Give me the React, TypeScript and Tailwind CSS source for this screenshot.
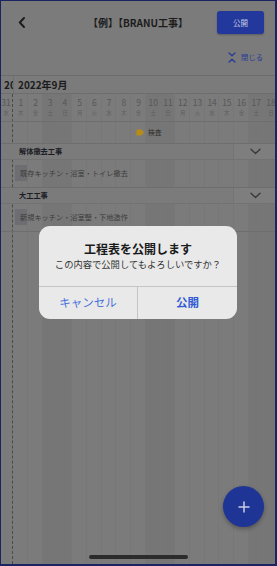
import React from "react";

const days: { d: number; w: string; we: boolean }[] = [
  { d: 31, w: "水", we: false },
  { d: 1, w: "木", we: false },
  { d: 2, w: "金", we: false },
  { d: 3, w: "土", we: true },
  { d: 4, w: "日", we: true },
  { d: 5, w: "月", we: false },
  { d: 6, w: "火", we: false },
  { d: 7, w: "水", we: false },
  { d: 8, w: "木", we: false },
  { d: 9, w: "金", we: false },
  { d: 10, w: "土", we: true },
  { d: 11, w: "日", we: true },
  { d: 12, w: "月", we: false },
  { d: 13, w: "火", we: false },
  { d: 14, w: "水", we: false },
  { d: 15, w: "木", we: false },
  { d: 16, w: "金", we: false },
  { d: 17, w: "土", we: true },
  { d: 18, w: "日", we: true },
];

function Chevron() {
  return (
    <svg width="11" height="7" viewBox="0 0 11 7" fill="none">
      <path d="M1 1.2 L5.5 5.5 L10 1.2" stroke="#3a3a3a" strokeWidth="1.4" strokeLinecap="round" strokeLinejoin="round" />
    </svg>
  );
}

function SectionRow({ title }: { title: string }) {
  return (
    <div className="flex h-[16px] border-b border-[#727272] bg-[#7b7b7b]">
      <div className="flex-1 flex items-center pl-[18px] text-[7.2px] font-bold text-[#1c1c24] leading-none">
        {title}
      </div>
      <div className="w-[42px] border-l border-[#747474] bg-[#7e7e7e] flex items-center justify-center pl-[2px]">
        <Chevron />
      </div>
    </div>
  );
}

function TaskRow({ title }: { title: string }) {
  return (
    <div className="relative h-[28px] border-b border-[#6e6e6e]">
      <div className="absolute left-[14px] top-[5px] w-[12px] h-[16px] bg-[#6d6d72]" />
      <div className="relative h-full flex items-center pl-[19px] text-[7.2px] text-[#3c3c3c] leading-none">
        {title}
      </div>
    </div>
  );
}

export default function App() {
  return (
    <div
      className="relative w-[277px] h-[566px] overflow-hidden bg-[#7b7b7b] border-l border-t border-r-2 border-b-2 border-[#1b2461] flex flex-col"
      style={{ fontFamily: '"Noto Sans CJK JP", "Noto Sans", sans-serif' }}
    >
      {/* Header */}
      <div className="h-[43px] flex items-center shrink-0">
        <div className="w-[60px] pl-[17px] flex items-center">
          <svg width="8" height="11" viewBox="0 0 8 11" fill="none">
            <path d="M6 1 L1.8 5.5 L6 10" stroke="#1c1c1c" strokeWidth="1.9" strokeLinecap="round" strokeLinejoin="round" />
          </svg>
        </div>
        <div className="flex-1 text-center text-[10px] font-bold text-[#1c1c1c] leading-none whitespace-nowrap">
          【例】【BRANU工事】
        </div>
        <div className="w-[60px] flex justify-end pr-[11px]">
          <div className="w-[47px] h-[23px] rounded-[3px] bg-[#23389c] flex items-center justify-center text-[7.5px] text-[#c9cce4] leading-none shadow-[0_1px_2px_rgba(0,0,0,0.25)]">
            公開
          </div>
        </div>
      </div>

      {/* Close row */}
      <div className="h-[32px] shrink-0 border-b border-[#6c6c6c] flex justify-end items-start pt-[8px] pr-[12px]">
        <div className="flex items-center gap-[5px]">
          <svg width="8" height="11" viewBox="0 0 8 11" fill="none">
            <path d="M1 1 L4 3.8 L7 1" stroke="#2b3d95" strokeWidth="1.4" strokeLinecap="round" strokeLinejoin="round" />
            <path d="M1 10 L4 7.2 L7 10" stroke="#2b3d95" strokeWidth="1.4" strokeLinecap="round" strokeLinejoin="round" />
          </svg>
          <span className="text-[7.3px] text-[#2b3d95] leading-none">閉じる</span>
        </div>
      </div>

      {/* Month row */}
      <div className="h-[18px] shrink-0 border-b border-[#6e6e6e] flex items-center">
        <div className="w-[13px] h-full overflow-hidden border-r border-[#707070] flex items-center">
          <span className="pl-[3px] text-[10px] font-bold text-[#1c1c1c] whitespace-nowrap leading-none">2022年8月</span>
        </div>
        <span className="pl-[4px] text-[10px] font-bold text-[#1c1c1c] whitespace-nowrap leading-none">2022年9月</span>
      </div>

      {/* Body */}
      <div className="relative flex-1">
        {/* column background */}
        <div className="absolute inset-0 flex ml-[-2.3px]">
          {days.map((c, i) => (
            <div
              key={i}
              className={`shrink-0 w-[14.72px] h-full ${c.we ? "bg-[#767676]" : "bg-[#7b7b7b]"} ${
                i === 0 ? "border-r border-dashed border-[#4a4a4a]" : "border-r border-[#777777]"
              }`}
            />
          ))}
        </div>

        <div className="relative flex flex-col">
          {/* day row */}
          <div className="h-[28px] border-b border-[#6e6e6e] flex ml-[-2.3px]">
            {days.map((c, i) => (
              <div key={i} className="shrink-0 w-[14.72px] flex flex-col items-center pt-[4px]">
                <span className="text-[8.5px] text-[#575757] leading-[9px]">{c.d}</span>
                <span className="mt-[3px] text-[5.5px] text-[#5e5e5e] leading-[6px]">{c.w}</span>
              </div>
            ))}
          </div>

          {/* inspection row */}
          <div className="h-[22px] border-b border-[#6e6e6e] flex items-center pl-[135px] gap-[4px]">
            <svg width="8" height="7" viewBox="0 0 8 7">
              <path d="M1 0.5 H4.8 Q5.3 0.5 5.7 0.9 L7.6 3.1 Q7.9 3.5 7.6 3.9 L5.7 6.1 Q5.3 6.5 4.8 6.5 H1 Q0.5 6.5 0.5 6 V1 Q0.5 0.5 1 0.5 Z" fill="#b88c12" />
            </svg>
            <span className="text-[6.8px] text-[#2e2e2e] leading-none">検査</span>
          </div>

          <SectionRow title="解体撤去工事" />
          <TaskRow title="既存キッチン・浴室・トイレ撤去" />
          <SectionRow title="大工工事" />
          <TaskRow title="新規キッチン・浴室壁・下地造作" />
        </div>
      </div>

      {/* Dialog */}
      <div className="absolute left-[38px] top-[225px] w-[198px] h-[93px] rounded-[11px] bg-[#e9e9e9] flex flex-col overflow-hidden">
        <div className="h-[60px] flex flex-col items-center pt-[16px]">
          <div className="text-[12px] font-bold text-[#1a1a1a] leading-[14px]">工程表を公開します</div>
          <div className="mt-[2px] text-[9.3px] text-[#333333] leading-[13px] whitespace-nowrap">この内容で公開してもよろしいですか？</div>
        </div>
        <div className="flex-1 flex border-t border-[#c4c4c4]">
          <div className="w-[99px] border-r border-[#c4c4c4] flex items-center justify-center text-[11.5px] text-[#4a72dc] leading-none">
            キャンセル
          </div>
          <div className="flex-1 flex items-center justify-center text-[11.5px] font-bold text-[#2f5ad4] leading-none">
            公開
          </div>
        </div>
      </div>

      {/* FAB */}
      <div className="absolute left-[222px] top-[485px] w-[41px] h-[41px] rounded-full bg-[#1f3596] flex items-center justify-center shadow-[0_2px_4px_rgba(0,0,0,0.3)]">
        <svg width="12" height="12" viewBox="0 0 12 12">
          <path d="M6 1 V11 M1 6 H11" stroke="#c9cde6" strokeWidth="1.5" strokeLinecap="round" />
        </svg>
      </div>

      {/* Home indicator */}
      <div className="absolute left-[88px] top-[554px] w-[99px] h-[4px] rounded-full bg-[#2b2b2b]" />
    </div>
  );
}
